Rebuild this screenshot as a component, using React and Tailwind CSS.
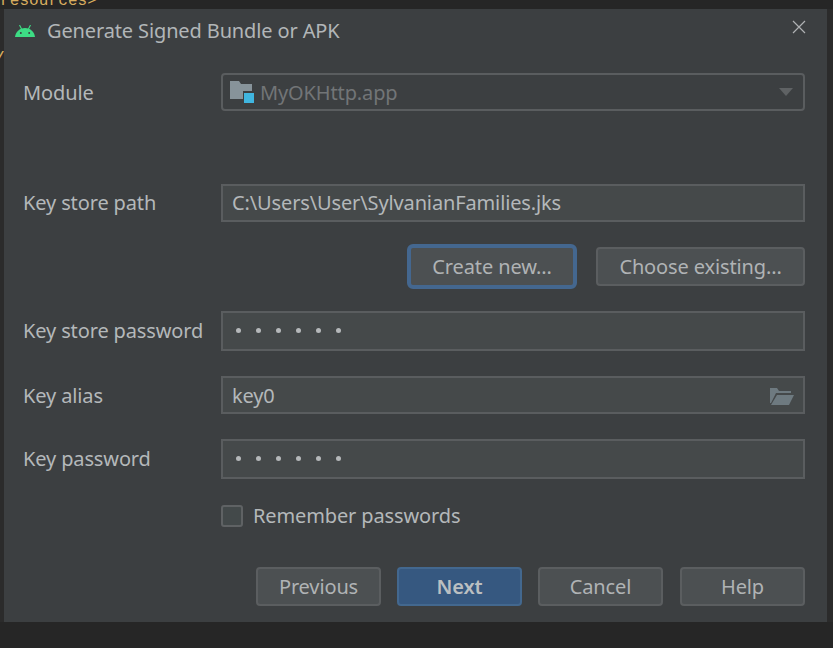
import React from 'react'

const AndroidIcon = () => (
  <svg width="20" height="12" viewBox="0 0 20 12" className="shrink-0">
    <path d="M0 12 C0.5 7 4.5 3 10 3 C15.5 3 19.5 7 20 12 Z" fill="#3ddc84" />
    <path d="M4.5 0 L6.8 4.5 M15.5 0 L13.2 4.5" stroke="#3ddc84" strokeWidth="1.1" />
    <circle cx="5.8" cy="8" r="1" fill="#3c3f41" />
    <circle cx="14.2" cy="8" r="1" fill="#3c3f41" />
  </svg>
)

const CloseIcon = () => (
  <svg width="14" height="14" viewBox="0 0 14 14">
    <path d="M1 1 L13 13 M13 1 L1 13" stroke="#afb1b3" strokeWidth="1.2" />
  </svg>
)

const ModuleIcon = () => (
  <svg width="24" height="22" viewBox="0 0 24 22" className="shrink-0">
    <path d="M0 0 H9 L11 3 H22 V18 H0 Z" fill="#87939a" />
    <rect x="13" y="10" width="11" height="12" fill="#3c3f41" />
    <rect x="14" y="12" width="10" height="10" fill="#40b6e0" />
  </svg>
)

const FolderIcon = () => (
  <svg width="24" height="18" viewBox="0 0 24 18">
    <path d="M0 1 H7 L9 4 H21 V6 H6 L1 16 H0 Z" fill="#6e7a80" />
    <path d="M7 8 H24 L19 18 H1 Z" fill="#6e7a80" />
  </svg>
)

const Label = ({ children, className = '' }) => (
  <div className={`w-[198px] shrink-0 text-[#b4b8ba] ${className}`}>{children}</div>
)

const Dots = () => (
  <div className="flex gap-[15px] pl-[13px] pb-[2px]">
    {[0, 1, 2, 3, 4, 5].map((i) => (
      <span key={i} className="w-[5px] h-[5px] rounded-full bg-[#b5b8ba]" />
    ))}
  </div>
)

const Field = ({ children, className = '' }) => (
  <div className={`flex-1 flex items-center bg-[#45494a] border-2 border-[#5a5d5f] ${className}`}>
    {children}
  </div>
)

const Button = ({ children, className = '' }) => (
  <button className={`flex items-center justify-center h-[39px] rounded-[4px] border-2 bg-[#4c5052] border-[#5b5e60] text-[#b0b3b5] ${className}`}>
    {children}
  </button>
)

export default function App() {
  return (
    <div className="w-[833px] h-[648px] overflow-hidden bg-[#2b2b2b] font-['Noto_Sans','Liberation_Sans',sans-serif] text-[20px] leading-[26px] tracking-[-0.13px]">
      <div className="h-[9px] overflow-hidden bg-[#262626]">
        <div className="-mt-[9px] text-[#d9ae5f] font-['Liberation_Mono',monospace] text-[16px] leading-[20px] tracking-[0.1px]">
          resources&gt;
        </div>
      </div>
      <div className="flex h-[613px]">
        <div className="w-[4px] overflow-hidden bg-[#2b2b2b]">
          <div className="mt-[40px] -ml-[6px] text-[#d9ae5f] font-['Liberation_Mono',monospace] text-[18px] leading-[20px]">/</div>
        </div>
        <div className="w-[823px] bg-[#3c3f41] flex flex-col pl-[19px] pr-[22px]">
          <div className="flex items-center h-[44px] -ml-[8px]">
            <AndroidIcon />
            <div className="ml-[12px] text-[#b2b6b8]">Generate Signed Bundle or APK</div>
            <div className="ml-auto -mt-[8px] -mr-[1px]"><CloseIcon /></div>
          </div>
          <div className="flex items-center h-[38px] mt-[20px]">
            <Label className="pt-[2px]">Module</Label>
            <div className="flex-1 h-full flex items-center pl-[7px] pr-[10px] rounded-[4px] border-2 border-[#5a5d5f]">
              <ModuleIcon />
              <span className="ml-[6px] pt-[2px] text-[#727577]">MyOKHttp.app</span>
              <span className="ml-auto w-0 h-0 border-x-[7px] border-x-transparent border-t-[8px] border-t-[#5f6264]" />
            </div>
          </div>
          <div className="flex items-stretch h-[38px] mt-[73px]">
            <Label className="flex items-center">Key store path</Label>
            <Field className="pl-[9px] text-[#b4b8ba]">C:\Users\User\SylvanianFamilies.jks</Field>
          </div>
          <div className="flex justify-end items-center h-[45px] mt-[22px] gap-[19px]">
            <button className="flex items-center justify-center w-[170px] h-[45px] rounded-[6px] border-[4px] border-[#44678f] bg-[#4c5052] text-[#b0b3b5]">
              Create new...
            </button>
            <Button className="w-[209px]">Choose existing...</Button>
          </div>
          <div className="flex items-stretch h-[40px] mt-[22px]">
            <Label className="flex items-center">Key store password</Label>
            <Field><Dots /></Field>
          </div>
          <div className="flex items-stretch h-[38px] mt-[25px]">
            <Label className="flex items-center pt-[1px]">Key alias</Label>
            <Field className="pl-[9px] pr-[9px] pt-[1px] text-[#b4b8ba]">
              key0
              <span className="ml-auto"><FolderIcon /></span>
            </Field>
          </div>
          <div className="flex items-stretch h-[40px] mt-[25px]">
            <Label className="flex items-center">Key password</Label>
            <Field><Dots /></Field>
          </div>
          <div className="flex items-center h-[22px] mt-[26px] pl-[198px]">
            <span className="w-[22px] h-[22px] rounded-[3px] border-2 border-[#5f6264] bg-[#43494a]" />
            <span className="ml-[10px] text-[#b4b8ba]">Remember passwords</span>
          </div>
          <div className="flex justify-end gap-[16px] mt-[40px]">
            <Button className="w-[125px]">Previous</Button>
            <Button className="w-[125px] bg-[#365880] border-[#43688f] font-semibold text-[#bbbfc1]">Next</Button>
            <Button className="w-[125px] mr-[1px]">Cancel</Button>
            <Button className="w-[125px]">Help</Button>
          </div>
        </div>
        <div className="flex-1 bg-[#2b2b2b]" />
      </div>
      <div className="h-[26px] bg-[#262626]" />
    </div>
  )
}
